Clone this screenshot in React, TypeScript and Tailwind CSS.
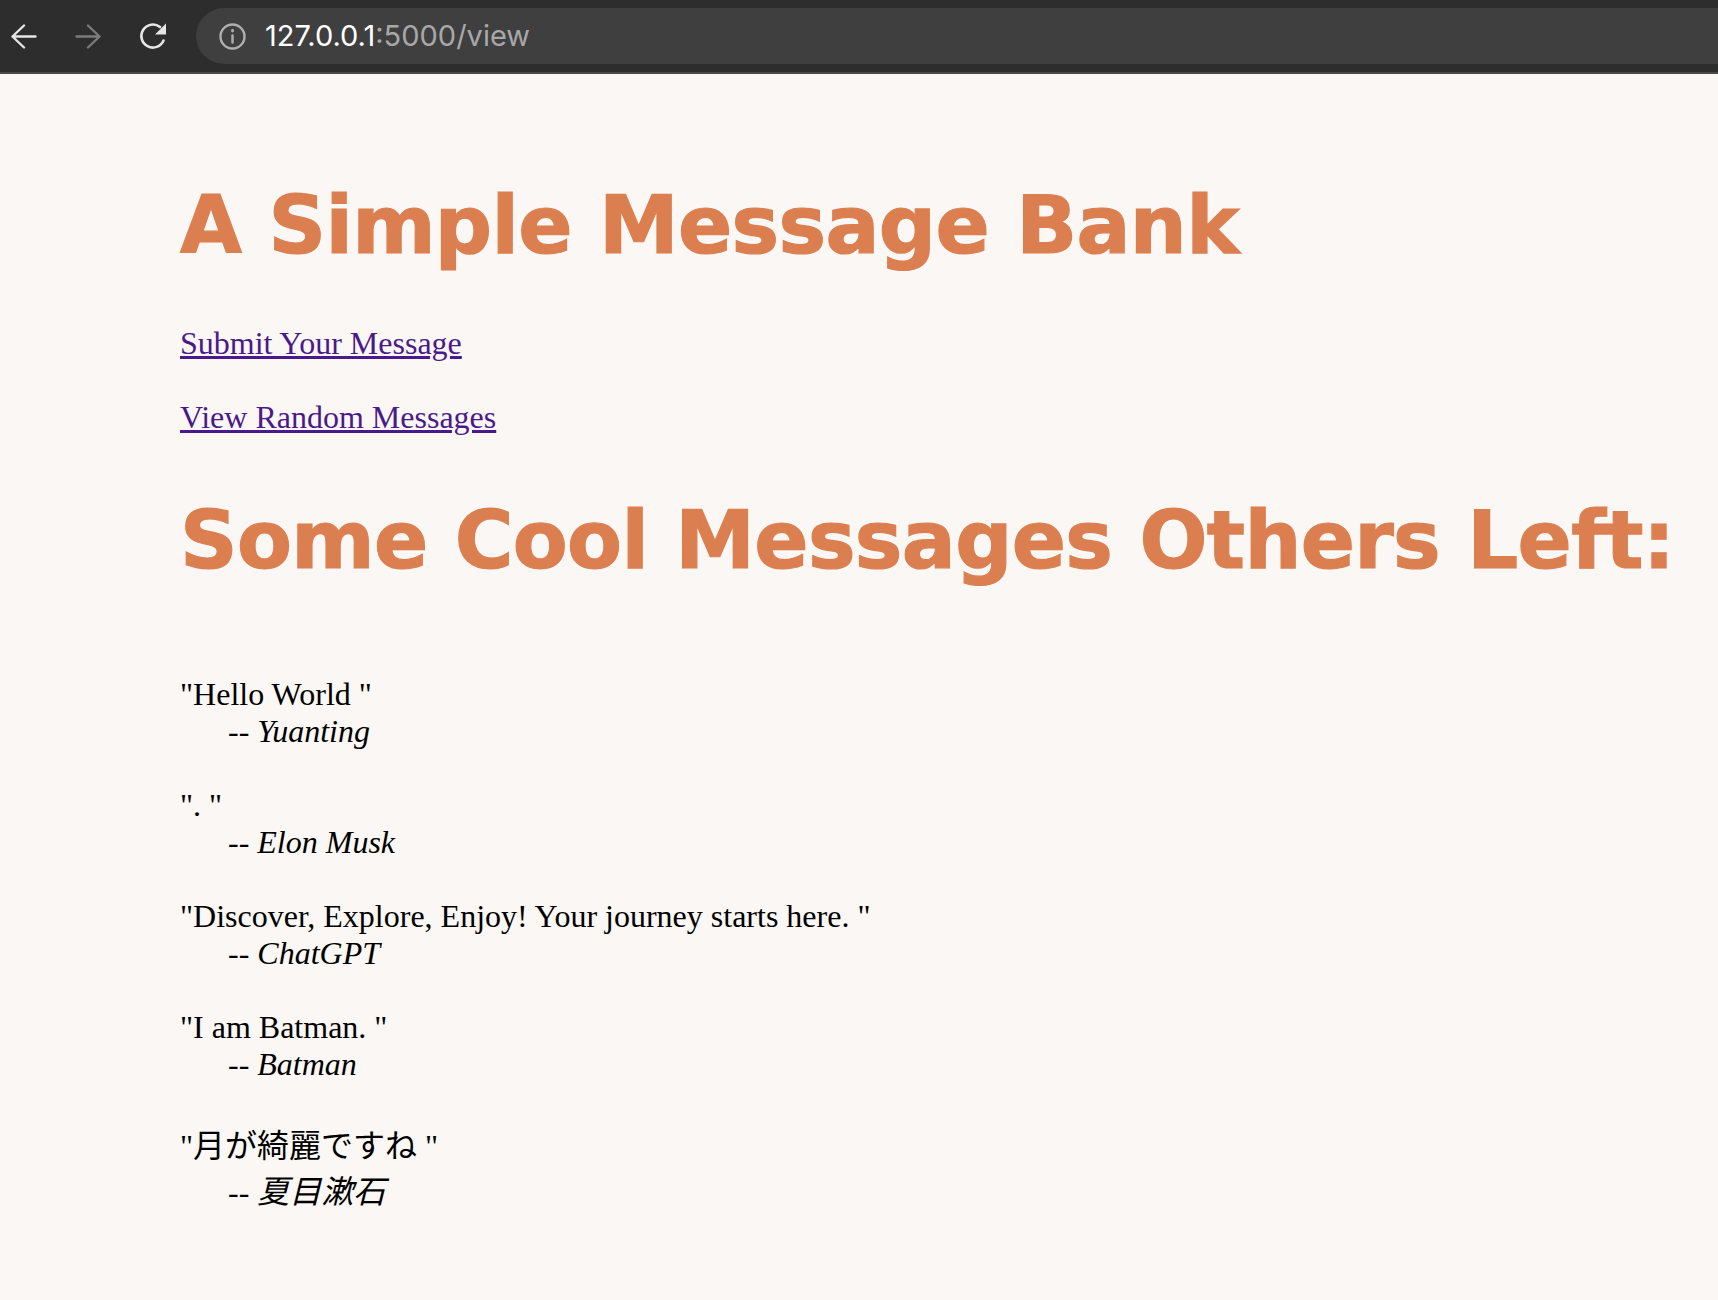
import React from "react";

const serif = "font-['Liberation_Serif','Noto_Sans_CJK_JP',serif]";
const heading =
  "font-['DejaVu_Sans',sans-serif] font-bold text-[80px] tracking-[-0.66px] leading-[94px] text-[#dc7f50] whitespace-nowrap [-webkit-text-stroke:1.2px_#dc7f50]";

const messages = [
  { text: '"Hello World "', who: "Yuanting" },
  { text: '". "', who: "Elon Musk" },
  { text: '"Discover, Explore, Enjoy! Your journey starts here. "', who: "ChatGPT" },
  { text: '"I am Batman. "', who: "Batman" },
  { text: '"月が綺麗ですね "', who: "夏目漱石" },
];

export default function App() {
  return (
    <div className="w-[1718px] h-[1300px] overflow-hidden bg-[#faf7f4] flex flex-col">
      <div className="h-[74px] shrink-0 bg-[#2d2d2d] border-b-2 border-[#4a4a4a] flex items-center">
        <div className="w-[196px] shrink-0 flex items-center h-full">
          <svg className="ml-[11px]" width="26" height="25" viewBox="0 0 26 25" fill="none" stroke="#e6e6e6" strokeWidth="2.4" strokeLinecap="round" strokeLinejoin="round">
            <path d="M1.5 12.5h23M13 1.5 1.5 12.5 13 23.5" />
          </svg>
          <svg className="ml-[38px]" width="26" height="25" viewBox="0 0 26 25" fill="none" stroke="#7b7b7b" strokeWidth="2.4" strokeLinecap="round" strokeLinejoin="round">
            <path d="M1.5 12.5h23M13 1.5l11.5 11L13 23.5" />
          </svg>
          <svg className="ml-[38px]" width="28" height="28" viewBox="0 0 28 28" fill="none" stroke="#e6e6e6" strokeWidth="2.6" strokeLinecap="round">
            <path d="M24.5 18.5A11.5 11.5 0 1 1 21 5" />
            <path d="M27 1.5V12.5H16z" fill="#e6e6e6" stroke="none" />
          </svg>
        </div>
        <div className="flex-1 h-[56px] bg-[#3f3f3f] rounded-l-[28px] flex items-center pl-[23px] font-['Inter',sans-serif] text-[29px]">
          <svg width="27" height="27" viewBox="0 0 27 27" fill="none" stroke="#b0b0b0" strokeWidth="2.4" strokeLinecap="round">
            <circle cx="13.5" cy="13.5" r="12" />
            <path d="M13.5 12.5v7" />
            <path d="M13.5 7.5v.5" strokeWidth="2.8" />
          </svg>
          <span className="ml-[19px] text-white">127.0.0.1</span>
          <span className="text-[#a8a8a8]">:5000/view</span>
        </div>
      </div>
      <main className={`pl-[180px] ${serif} text-[32px] leading-[normal] text-black`}>
        <h1 className={`mt-[105px] ${heading}`}>A Simple Message Bank</h1>
        <p className="mt-[52px]"><a className="underline text-[#4a1a8a]">Submit Your Message</a></p>
        <p className="mt-[37px]"><a className="underline text-[#4a1a8a]">View Random Messages</a></p>
        <h1 className={`mt-[58px] ${heading}`}>Some Cool Messages Others Left:</h1>
        <div className="mt-[88px] flex flex-col gap-[37px]">
          {messages.map((m) => (
            <div key={m.who}>
              <div>{m.text}</div>
              <div className="pl-[48px]">-- <em>{m.who}</em></div>
            </div>
          ))}
        </div>
      </main>
    </div>
  );
}
